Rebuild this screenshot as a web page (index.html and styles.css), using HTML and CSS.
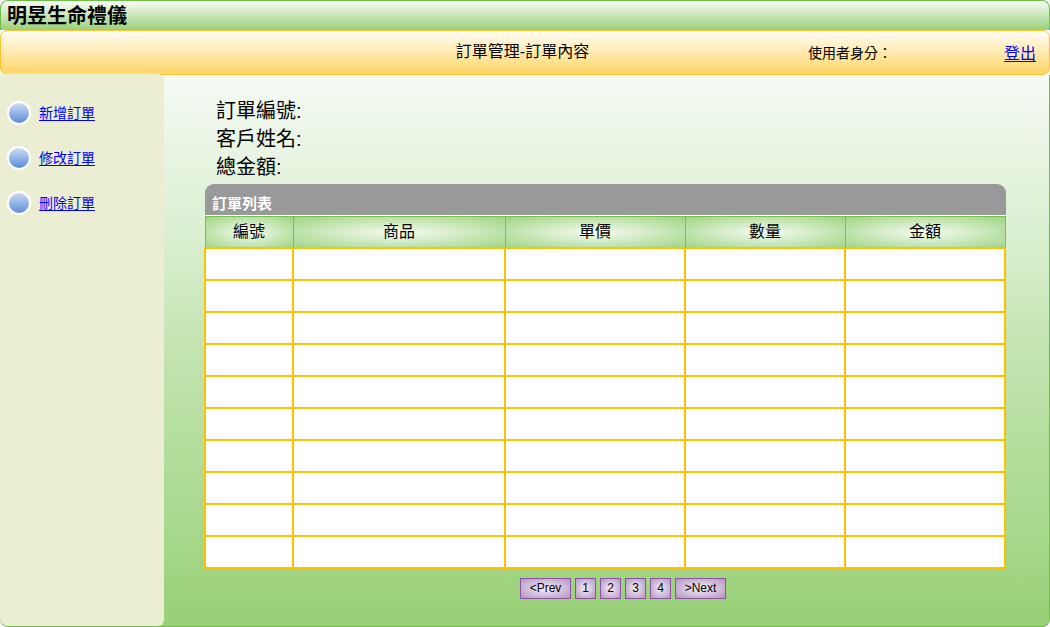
FILE: index.html
```html
<!DOCTYPE html>
<html lang="zh-Hant">
<head>
<meta charset="utf-8">
<title>明昱生命禮儀</title>
<link rel="stylesheet" href="styles.css">
</head>
<body>
<div class="page">
  <header class="brand"><h1 class="brand-name">明昱生命禮儀</h1></header>
  <div class="toolbar">
    <h2 class="toolbar-title">訂單管理-訂單內容</h2>
    <div class="user">
      <span class="user-role">使用者身分：</span>
      <a class="logout" href="#">登出</a>
    </div>
  </div>
  <div class="body">
    <nav class="sidebar">
      <ul class="menu">
        <li class="menu-item"><span class="dot"></span><a href="#">新增訂單</a></li>
        <li class="menu-item"><span class="dot"></span><a href="#">修改訂單</a></li>
        <li class="menu-item"><span class="dot"></span><a href="#">刪除訂單</a></li>
      </ul>
    </nav>
    <main class="main">
      <div class="summary">
        <p>訂單編號:</p>
        <p>客戶姓名:</p>
        <p>總金額:</p>
      </div>
      <table class="orders">
        <caption>訂單列表</caption>
        <colgroup><col class="col-id"><col class="col-item"><col class="col-price"><col class="col-qty"><col class="col-total"></colgroup>
        <thead>
          <tr><th scope="col">編號</th><th scope="col">商品</th><th scope="col">單價</th><th scope="col">數量</th><th scope="col">金額</th></tr>
        </thead>
        <tbody>
          <tr><td></td><td></td><td></td><td></td><td></td></tr>
          <tr><td></td><td></td><td></td><td></td><td></td></tr>
          <tr><td></td><td></td><td></td><td></td><td></td></tr>
          <tr><td></td><td></td><td></td><td></td><td></td></tr>
          <tr><td></td><td></td><td></td><td></td><td></td></tr>
          <tr><td></td><td></td><td></td><td></td><td></td></tr>
          <tr><td></td><td></td><td></td><td></td><td></td></tr>
          <tr><td></td><td></td><td></td><td></td><td></td></tr>
          <tr><td></td><td></td><td></td><td></td><td></td></tr>
          <tr><td></td><td></td><td></td><td></td><td></td></tr>
        </tbody>
      </table>
      <div class="pager">
        <button class="page-btn page-step" type="button">&lt;Prev</button>
        <button class="page-btn" type="button">1</button>
        <button class="page-btn" type="button">2</button>
        <button class="page-btn" type="button">3</button>
        <button class="page-btn" type="button">4</button>
        <button class="page-btn page-step" type="button">&gt;Next</button>
      </div>
    </main>
  </div>
</div>
</body>
</html>
```

FILE: styles.css
```css
* {
  box-sizing: border-box;
}

body {
  margin: 0;
  background: #fff;
  color: #000;
  font-family: "Liberation Sans", "Noto Sans CJK TC", sans-serif;
  font-size: 16px;
}

h1, h2, p, ul {
  margin: 0;
  padding: 0;
  font-weight: 400;
}

a {
  color: #00f;
  text-underline-offset: 2px;
}

.page {
  display: flex;
  flex-direction: column;
  min-height: 100vh;
}

.brand {
  height: 30px;
  padding: 0 6px;
  border: 1px solid #6fbe4a;
  border-bottom: 0;
  border-radius: 8px 8px 0 0;
  background: linear-gradient(#f8fcf6, #99d07b);
}

.brand-name {
  font-size: 20px;
  font-weight: 700;
  line-height: 30px;
}

.toolbar {
  display: grid;
  grid-template-columns: 1fr auto 1fr;
  align-items: center;
  height: 45px;
  padding: 0 13px 2px 8px;
  border: 1px solid #ffc52e;
  border-radius: 7px;
  background: linear-gradient(#fffdf8, #ffd666);
}

.toolbar-title {
  grid-column: 2;
  font-size: 16px;
  line-height: 24px;
}

.user {
  display: flex;
  justify-content: flex-end;
  align-items: center;
  gap: 112px;
}

.user-role {
  font-size: 14px;
}

.logout {
  font-size: 16px;
}

.body {
  display: flex;
  flex: 1;
  border: 1px solid #6fbe4a;
  border-top: 0;
  border-left: 0;
  border-radius: 0 0 8px 8px;
  background: linear-gradient(#f5faf4, #dff1d6 25%, #c3e4b1 50%, #a5d789 85%, #98cf77);
}

.sidebar {
  width: 164px;
  flex: none;
  margin-top: -1px;
  padding: 16px 7px;
  border-radius: 0 6px 6px 8px;
  background: #ebeed3;
}

.menu {
  list-style: none;
}

.menu-item {
  display: flex;
  align-items: center;
  gap: 8px;
  height: 45px;
  font-size: 14px;
  line-height: 20px;
}

.dot {
  width: 24px;
  height: 24px;
  border: 2px solid #fff;
  border-radius: 50%;
  background: linear-gradient(#cddcf4, #5b8ddb);
}

.main {
  flex: 1;
  padding: 22px 43px 27px 40px;
}

.summary {
  padding: 0 12px 3px;
  font-size: 20px;
  line-height: 28px;
}

.orders {
  width: 100%;
  table-layout: fixed;
  border-collapse: collapse;
}

.orders caption {
  height: 32px;
  margin-left: 1px;
  padding: 9px 7px 0;
  border-bottom: 1px solid #fff;
  border-radius: 9px 9px 0 0;
  background: #999;
  color: #fff;
  font-size: 15px;
  font-weight: 700;
  line-height: 22px;
  text-align: left;
}

.col-id {
  width: 11%;
}

.col-item {
  width: 26.5%;
}

.col-price {
  width: 22.5%;
}

.col-qty,
.col-total {
  width: 20%;
}

.orders th {
  height: 31px;
  padding: 0;
  border: 1px solid #77c152;
  background: radial-gradient(ellipse farthest-corner, #f6fbf3, #a0d584);
  font-weight: 400;
  line-height: 24px;
}

.orders td {
  height: 32px;
  padding: 0;
  border: 2px solid #ffc000;
  background: #fff;
}

.pager {
  display: flex;
  justify-content: center;
  gap: 4px;
  padding: 9px 0 0 36px;
}

.page-btn {
  width: 21px;
  height: 21px;
  padding: 0;
  border: 1px solid #8a54a2;
  background: radial-gradient(ellipse farthest-corner, #f5eff7, #b493c3);
  color: #000;
  font-family: inherit;
  font-size: 12px;
  line-height: 18px;
}

.page-step {
  width: 51px;
}
```
